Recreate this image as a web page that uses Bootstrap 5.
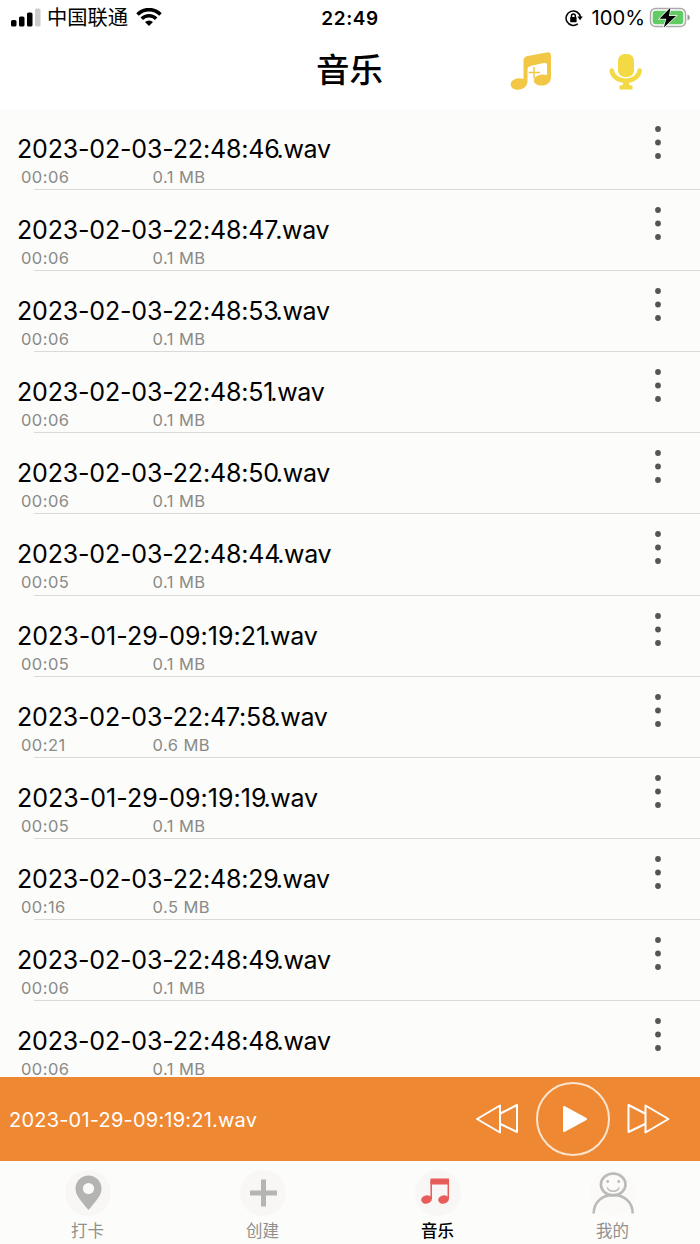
<!DOCTYPE html>
<html lang="zh-CN">
<head>
<meta charset="utf-8">
<meta name="viewport" content="width=device-width, initial-scale=1">
<title>音乐</title>
<link href="https://cdn.jsdelivr.net/npm/bootstrap@5.3.0/dist/css/bootstrap.min.css" rel="stylesheet">
<style>
body{font-family:Inter,"Noto Sans CJK SC",sans-serif;color:#000;background:#fff;line-height:1}
svg{display:block;flex:none}
.screen{width:700px;height:1244px}
.status{height:36px;padding-left:11px;padding-right:10px;font-size:20px}
.status>div{flex:1 1 0}
.carrier{margin-left:6px;font-size:20.3px;padding-top:1px}
.charge{margin:0 4px 0 9px;font-size:20.2px}
.clock{font-weight:600;font-size:19px;letter-spacing:.55px;margin-right:1px}
.titlebar{height:73px;padding-right:57px}
.titlebar h1{font-size:33.5px;font-weight:500;margin:0;padding-left:189px;padding-bottom:4px}
.titlebar svg{margin-top:-2px}
.tracks{height:968px;background:#fcfcfa}
.track{height:81.1px}
.track-body{min-height:0}
.track-text{padding:26px 0 0 17px}
.track-name{font-size:25px;line-height:28px;letter-spacing:-.17px;white-space:nowrap}
.track-name.january{letter-spacing:.02px}
.extension{margin-left:-3px;letter-spacing:-.3px}
.track-info{font-size:16.5px;line-height:28px;color:#8a8a88;padding-left:4px;letter-spacing:.45px}
.track-time{width:131.5px}
.track-menu{margin:17px 38px 0 0}
.rule{height:1px;margin-left:34px;background:#dadad8;flex:none}
.player{height:84px;background:#ef8833;color:#fff;padding:0 29px 0 9px}
.player-name{font-size:20px;letter-spacing:.21px;padding-top:1px}
.tabs{height:83px;background:#fcfcfa;color:#8f8f8d;font-size:16.5px}
.tab-item{padding-top:9px}
.tab-item svg{margin-bottom:7px}
.tab-item.current span{font-weight:500}
</style>
</head>
<body>
<svg width="0" height="0" class="position-absolute"><defs><g id="dots" fill="#555"><circle cx="4" cy="3" r="2.9"/><circle cx="4" cy="16.5" r="2.9"/><circle cx="4" cy="30" r="2.9"/></g></defs></svg>
<div class="screen d-flex flex-column overflow-hidden">
<header class="status d-flex align-items-center">
<div class="d-flex align-items-center">
<svg width="30" height="20" viewBox="0 0 30 20"><rect x="0" y="12" width="5.5" height="6.5" rx="1.6"/><rect x="8" y="8.5" width="5.5" height="10" rx="1.6"/><rect x="16" y="4.5" width="5.5" height="14" rx="1.6"/><rect x="24" y=".5" width="5.5" height="18" rx="1.6" fill="#ccc"/></svg>
<span class="carrier">中国联通</span>
<svg width="26" height="20" viewBox="0 0 26 20" class="ms-2" fill="none" stroke="#000" stroke-width="3.6"><path d="M1.500 6.400a16.200 16.200 0 0 1 23 0M5.800 10.800a10.200 10.200 0 0 1 14.400 0"/><path d="M13 18 9 14.100a5.800 5.800 0 0 1 8 0z" fill="#000" stroke="none"/></svg>
</div>
<span class="clock">22:49</span>
<div class="d-flex align-items-center justify-content-end">
<svg width="18" height="18" viewBox="0 0 18 18" fill="none" stroke="#000" stroke-width="1.5"><path d="M12.8 14.8A7.2 7.2 0 1 1 15.4 8"/><path d="M12.400 7.500h5.400l-2.700 3.800z" fill="#000" stroke="none"/><rect x="5.200" y="8" width="6.400" height="5.200" rx=".7" fill="#000" stroke="none"/><path d="M6.500 8.400V6.800a1.900 1.900 0 0 1 3.800 0v1.600"/></svg>
<span class="charge">100%</span>
<svg width="41" height="22" viewBox="0 0 41 22"><rect x="1.500" y="1.500" width="35" height="18" rx="5" fill="none" stroke="#aaa" stroke-width="1.500"/><rect x="3.700" y="3.700" width="30.600" height="13.600" rx="3" fill="#62cb64"/><path d="M38.500 7.500v6c3-1 3-5 0-6z" fill="#999"/><path d="M21.500 .5 10.500 11.800h6.800L14.800 20.500 27 8.900h-7z" stroke="#fff" stroke-width="1.400" paint-order="stroke"/></svg>
</div>
</header>
<div class="titlebar d-flex align-items-center">
<h1 class="flex-grow-1 text-center">音乐</h1>
<svg width="42" height="40" viewBox="0 0 42 40" fill="#f2c745"><path fill-rule="evenodd" d="M13.500 8.500Q13.500 5.500 16.500 4.300L36.500 .4Q41-.3 41 4v21c0 5-4 8.600-9 8.600-9 0-11-7-4-10 3-1.500 6-1.200 9-.5V13q0-2.700-3.500-2L20.500 14q-3 .8-3 3v12c0 5-4 8.700-9.500 8.700-8.500 0-9.500-7.700-3.500-10.400 3-1.300 6-1.300 9-.3z"/><path d="M24 15v11M18.500 20.500h11.500" fill="none" stroke="#f2c745" stroke-width="1.500"/></svg>
<svg width="34" height="38" viewBox="0 0 34 38" fill="#f3da45" style="margin-left:57px"><rect x="9" y="1" width="16" height="23" rx="6.500"/><path d="M2.700 17.500c.5 6 7 10.200 14 10.200s13.500-4.200 14-10.200" fill="none" stroke="#f3da45" stroke-width="4.500" stroke-linecap="round"/><path d="M14 28h6v2.500q0 2 2 2h1.500v4h-13v-4H12q2 0 2-2z"/></svg>
</div>
<main class="tracks overflow-hidden" id="tracks"></main>
<section class="player d-flex align-items-center">
<span class="player-name flex-grow-1">2023-01-29-09:19:21.wav</span>
<svg width="44" height="32" viewBox="0 0 44 32" fill="none" stroke="#fff" stroke-width="2" stroke-linejoin="round"><path d="M25 2.500v27L2 16zM25.500 10.500 42 2v27L25.500 21"/></svg>
<svg width="74" height="74" viewBox="0 0 74 74" style="margin:0 17px"><circle cx="37" cy="37" r="36" fill="none" stroke="#fce5ce" stroke-width="2"/><path d="M28 25v24L50 37z" fill="#fff" stroke="#fff" stroke-width="2" stroke-linejoin="round"/></svg>
<svg width="44" height="32" viewBox="0 0 44 32" fill="none" stroke="#fff" stroke-width="2" stroke-linejoin="round"><path d="M18.500 2.500v27l23-13.500zM18 10.500 1.500 2v27L18 21"/></svg>
</section>
<nav class="tabs row g-0 text-center">
<div class="tab-item col d-flex flex-column align-items-center"><svg width="46" height="46" viewBox="0 0 46 46"><circle cx="23" cy="23" r="23" fill="#f8f7f6"/><path d="M23.500 5.500a13 13 0 0 0-13 13c0 7 5 12 13 21.500 8-9.500 13-14.500 13-21.500a13 13 0 0 0-13-13z" fill="#b4b4b3"/><circle cx="23.500" cy="18.500" r="5.600" fill="#fafaf9"/></svg><span>打卡</span></div>
<div class="tab-item col d-flex flex-column align-items-center"><svg width="46" height="46" viewBox="0 0 46 46"><circle cx="23" cy="23" r="23" fill="#f8f7f6"/><path d="M23.500 9.500v27M10 23h27" stroke="#b4b4b3" stroke-width="5"/></svg><span>创建</span></div>
<div class="tab-item current col d-flex flex-column align-items-center text-black"><svg width="46" height="46" viewBox="0 0 46 46"><circle cx="23" cy="23" r="23" fill="#f8f7f6"/><path d="M15.500 8.500H34v6H15.500z" fill="#e65d5a"/><path d="M16.200 10v19M33.300 10v19" stroke="#e65d5a" stroke-width="1.500"/><g fill="#e65d5a"><ellipse cx="11.500" cy="29.500" rx="5.400" ry="4.200" transform="rotate(-12 11.500 29.500)"/><ellipse cx="28.500" cy="29.500" rx="5.400" ry="4.200" transform="rotate(-12 28.500 29.500)"/></g></svg><span>音乐</span></div>
<div class="tab-item col d-flex flex-column align-items-center"><svg width="46" height="46" viewBox="0 0 46 46" fill="none" stroke="#bababa" stroke-width="2.600"><circle cx="23" cy="23" r="23" fill="#fbfaf8" stroke="none"/><ellipse cx="23.200" cy="14.500" rx="12.300" ry="11"/><path d="M3.700 43.500c0-11 8-18.500 19.500-18.500s19.500 7.500 19.500 18.500"/><path d="M17.200 17.500c2 5 10 5 12 0" stroke-width="1.500"/><circle cx="17.700" cy="11.500" r="1.400" fill="#bababa" stroke="none"/><circle cx="28.700" cy="11.500" r="1.400" fill="#bababa" stroke="none"/></svg><span>我的</span></div>
</nav>
</div>
<script src="https://cdn.jsdelivr.net/npm/bootstrap@5.3.0/dist/js/bootstrap.bundle.min.js"></script>
<script>
const tracks = [
["2023-02-03-22:48:46","00:06","0.1"],["2023-02-03-22:48:47","00:06","0.1"],
["2023-02-03-22:48:53","00:06","0.1"],["2023-02-03-22:48:51","00:06","0.1"],
["2023-02-03-22:48:50","00:06","0.1"],["2023-02-03-22:48:44","00:05","0.1"],
["2023-01-29-09:19:21","00:05","0.1"],["2023-02-03-22:47:58","00:21","0.6"],
["2023-01-29-09:19:19","00:05","0.1"],["2023-02-03-22:48:29","00:16","0.5"],
["2023-02-03-22:48:49","00:06","0.1"],["2023-02-03-22:48:48","00:06","0.1"]];
document.getElementById("tracks").innerHTML = tracks.map(([name,time,size]) => `
<article class="track d-flex flex-column">
<div class="track-body d-flex justify-content-between flex-grow-1">
<div class="track-text"><div class="track-name${name.startsWith("2023-01") ? " january" : ""}">${name}<span class="extension">.wav</span></div><div class="track-info d-flex"><span class="track-time">${time}</span><span>${size} MB</span></div></div>
<svg class="track-menu" width="8" height="34"><use href="#dots"/></svg>
</div><div class="rule"></div></article>`).join("");
</script>
</body>
</html>
